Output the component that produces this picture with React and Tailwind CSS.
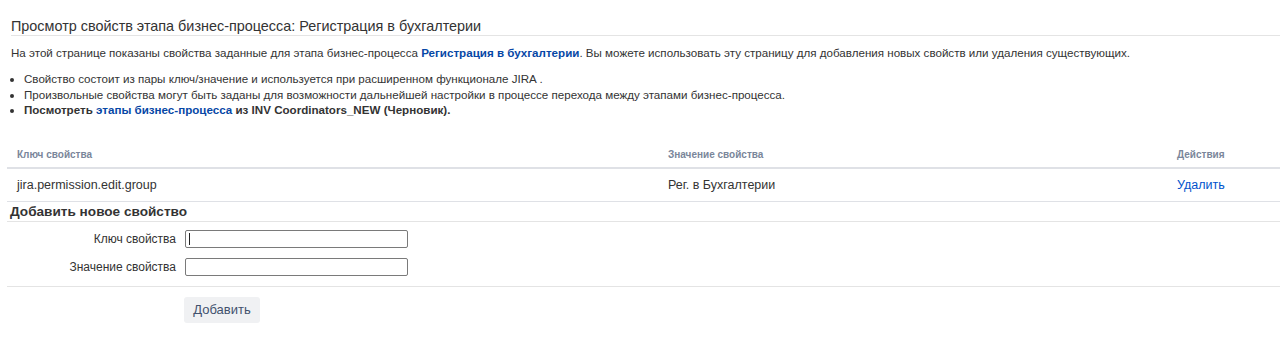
export default function App() {
  const f = { fontFamily: '"Liberation Sans", Arial, sans-serif' };
  return (
    <div className="w-[1280px] h-[340px] bg-white text-[#333] overflow-hidden" style={f}>
      <div className="pl-[11px] pt-[17px]">
        <h2 className="text-[14.4px] leading-[18px] border-b border-[#e4e4e4] text-[#333] font-normal">
          Просмотр свойств этапа бизнес-процесса: Регистрация в бухгалтерии
        </h2>
        <p className="text-[11.6px] leading-[14px] mt-[10px]">
          На этой странице показаны свойства заданные для этапа бизнес-процесса{" "}
          <a className="text-[#0747a6] font-bold">Регистрация в бухгалтерии</a>. Вы можете использовать эту страницу для добавления новых свойств или удаления существующих.
        </p>
        <ul className="text-[11.6px] leading-[15.5px] mt-[11px] list-disc pl-[13px]">
          <li>Свойство состоит из пары ключ/значение и используется при расширенном функционале JIRA .</li>
          <li>Произвольные свойства могут быть заданы для возможности дальнейшей настройки в процессе перехода между этапами бизнес-процесса.</li>
          <li className="font-bold">
            Посмотреть <a className="text-[#0747a6]">этапы бизнес-процесса</a> из INV Coordinators_NEW (Черновик).
          </li>
        </ul>
      </div>
      <div className="ml-[7px] mt-[24px]">
        <div className="grid grid-cols-[651px_509px_1fr] text-[10px] font-bold text-[#7a869a] h-[27px] items-center border-b-2 border-[#dfe1e6]">
          <div className="pl-[10px]">Ключ свойства</div>
          <div className="pl-[10px]">Значение свойства</div>
          <div className="pl-[10px]">Действия</div>
        </div>
        <div className="grid grid-cols-[651px_509px_1fr] text-[12.5px] h-[33px] items-center border-b border-[#dfe1e6] pt-[1px]">
          <div className="pl-[10px]">jira.permission.edit.group</div>
          <div className="pl-[10px]">Рег. в Бухгалтерии</div>
          <div className="pl-[10px] text-[#0052cc]">Удалить</div>
        </div>
        <div className="text-[13.6px] font-bold leading-[19px] border-b border-[#e4e4e4] pl-[3px]">
          Добавить новое свойство
        </div>
        <div className="border-b border-[#e4e4e4] pt-[8px] pb-[9px]">
          <div className="flex items-center h-[19px]">
            <label className="w-[169px] text-right text-[12px]">Ключ свойства</label>
            <div className="relative ml-[9px]">
              <input className="w-[223px] h-[18px] border border-[#7a7a7a] rounded-[2px] text-[11px] px-1 outline-none block" />
              <span className="absolute left-[4px] top-[3px] w-[1px] h-[12px] bg-[#222]" />
            </div>
          </div>
          <div className="flex items-center h-[19px] mt-[9px]">
            <label className="w-[169px] text-right text-[12px]">Значение свойства</label>
            <input className="ml-[9px] w-[223px] h-[18px] border border-[#7a7a7a] rounded-[2px] text-[11px] px-1 outline-none" />
          </div>
        </div>
        <div className="pl-[177px] pt-[10px]">
          <button className="w-[76px] h-[26px] bg-[#f0f1f3] rounded-[3px] text-[13px] text-[#42526e]">Добавить</button>
        </div>
      </div>
    </div>
  );
}
